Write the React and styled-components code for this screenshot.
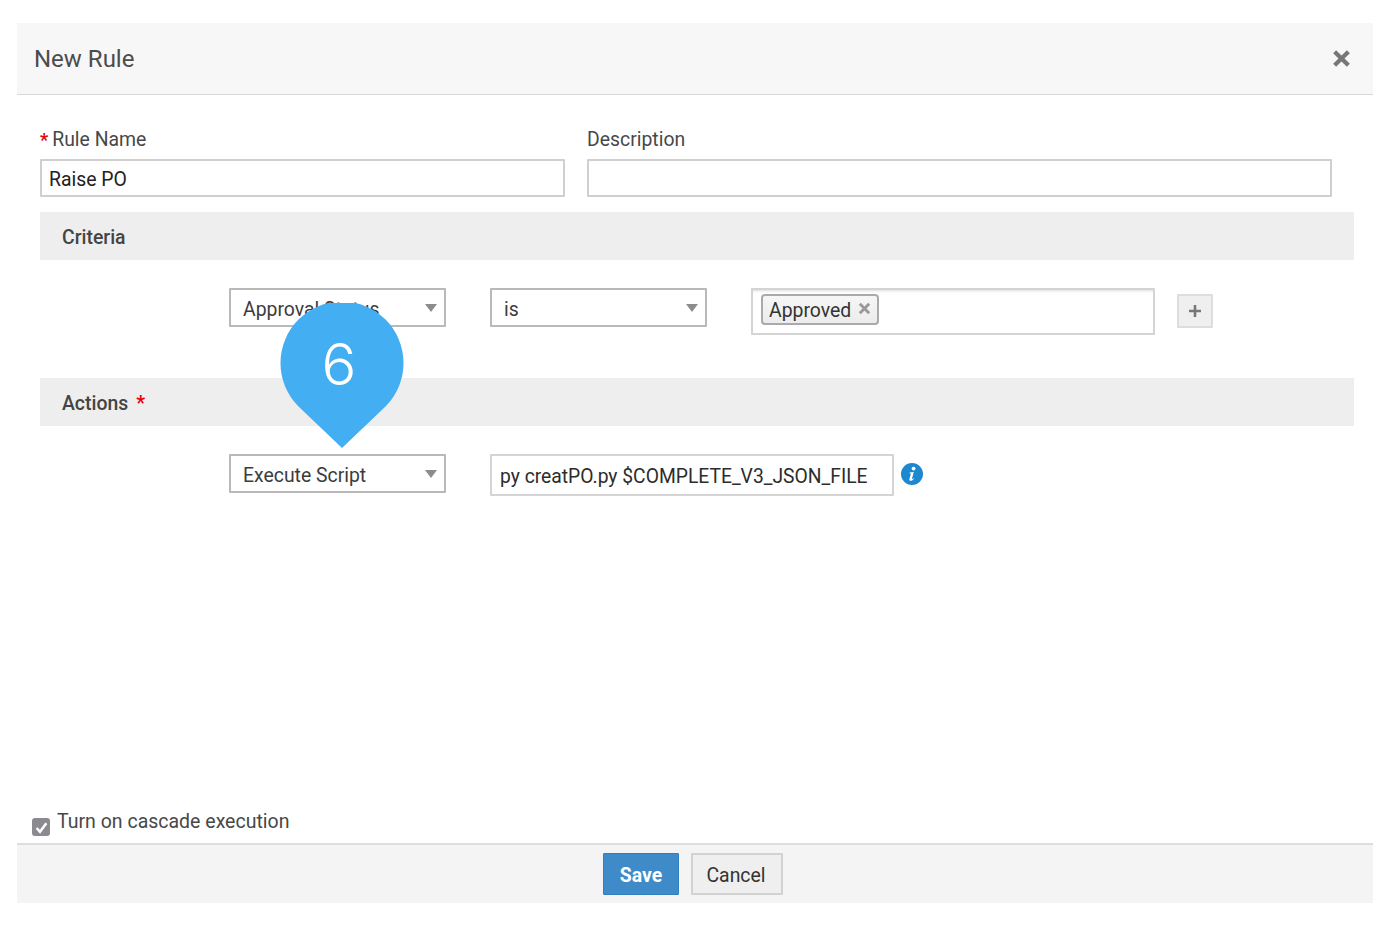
import React from 'react';
import styled, { createGlobalStyle } from 'styled-components';

const GlobalStyle = createGlobalStyle`
  html, body {
    margin: 0;
    padding: 0;
    background: #fff;
  }
  body {
    font-family: Roboto, "Liberation Sans", sans-serif;
    color: #444;
  }
  * {
    box-sizing: border-box;
  }
`;

const CrossIcon = ({ size = 18, color = '#777' }) => (
  <svg width={size} height={size} viewBox="0 0 18 18">
    <path d="M2.5 2.5L15.5 15.5M15.5 2.5L2.5 15.5" stroke={color} strokeWidth="4" fill="none" />
  </svg>
);

const Pin = () => (
  <PinWrap>
    <svg width="124" height="146" viewBox="0 0 124 146">
      <path
        d="M62 145L18 103A61.5 61.5 0 1 1 106 103Z"
        fill="#44aef2"
      />
    </svg>
    <PinNumber>6</PinNumber>
  </PinWrap>
);

export default function App() {
  return (
    <Page>
      <GlobalStyle />
      <Modal>
        <Header>
          <Title>New Rule</Title>
          <CrossIcon size={19} />
        </Header>

        <Body>
          <Fields>
            <Field>
              <Label>
                <Star>*</Star>Rule Name
              </Label>
              <TextBox readOnly value="Raise PO" />
            </Field>
            <Field>
              <Label>Description</Label>
              <TextBox readOnly value="" />
            </Field>
          </Fields>

          <Band>Criteria</Band>
          <CriteriaRow>
            <Select>Approval Status</Select>
            <Select>is</Select>
            <TagInput>
              <Tag>
                Approved
                <CrossIcon size={13} color="#999" />
              </Tag>
            </TagInput>
            <PlusButton>
              <svg width="14" height="14" viewBox="0 0 14 14">
                <path d="M7 1V13M1 7H13" stroke="#777" strokeWidth="2.6" fill="none" />
              </svg>
            </PlusButton>
          </CriteriaRow>

          <Band>
            Actions<BandStar>*</BandStar>
          </Band>
          <ActionRow>
            <Select>Execute Script</Select>
            <ScriptBox>py creatPO.py $COMPLETE_V3_JSON_FILE</ScriptBox>
            <svg width="22" height="22" viewBox="0 0 22 22">
              <circle cx="11" cy="11" r="11" fill="#1e88cf" />
              <circle cx="12.6" cy="5.6" r="1.9" fill="#fff" />
              <path
                d="M8.6 9.4L12.8 9L11 15.4C10.8 16.1 11.3 16.2 12.6 15.2L13 15.7C11.4 17.4 10.4 17.9 9.3 17.8C8.3 17.7 8.2 16.9 8.5 15.8L9.8 11C9.9 10.4 9.5 10.2 8.5 10.2Z"
                fill="#fff"
              />
            </svg>
          </ActionRow>

          <Cascade>
            <CheckBox>
              <svg width="13" height="13" viewBox="0 0 12 12">
                <path d="M1.5 6.5L4.6 10L10.5 2" stroke="#fff" strokeWidth="2.3" fill="none" />
              </svg>
            </CheckBox>
            Turn on cascade execution
          </Cascade>
        </Body>

        <Footer>
          <SaveButton>Save</SaveButton>
          <CancelButton>Cancel</CancelButton>
        </Footer>
      </Modal>
      <Pin />
    </Page>
  );
}

const Page = styled.div`
  position: relative;
  width: 1396px;
  height: 928px;
  padding: 23px 23px 25px 17px;
  overflow: hidden;
`;

const Modal = styled.div`
  display: flex;
  flex-direction: column;
  height: 100%;
`;

const Header = styled.div`
  display: flex;
  align-items: center;
  justify-content: space-between;
  flex: none;
  height: 72px;
  padding: 0 22px 0 17px;
  background: #f7f7f7;
  border-bottom: 1px solid #d8d8d8;
`;

const Title = styled.div`
  font-size: 24px;
  color: #4c4c4c;
`;

const Body = styled.div`
  display: flex;
  flex-direction: column;
  flex: 1;
  padding: 32px 19px 0 23px;
`;

const Fields = styled.div`
  display: grid;
  grid-template-columns: 525px 745px;
  column-gap: 22px;
`;

const Field = styled.div`
  display: flex;
  flex-direction: column;
  gap: 8px;
`;

const Label = styled.label`
  height: 24px;
  padding-top: 1px;
  font-size: 19.4px;
  line-height: 24px;
  color: #484848;
`;

const Star = styled.span`
  color: #e8000b;
  margin-right: 4px;
  font-size: 18px;
  font-weight: 700;
  line-height: 1;
`;

const TextBox = styled.input`
  width: 100%;
  height: 38px;
  padding: 2px 7px 0;
  border: 2px solid #cfcfcf;
  border-radius: 1px;
  outline: none;
  background: #fff;
  color: #222;
  font: 19.4px Roboto, sans-serif;
`;

const Band = styled.div`
  display: flex;
  align-items: center;
  height: 48px;
  margin-top: 15px;
  padding: 2px 0 0 22px;
  background: #eee;
  color: #444;
  font-size: 19.4px;
  font-weight: 500;
`;

const BandStar = styled.span`
  color: #e8000b;
  margin-left: 8px;
  font-weight: 700;
`;

const CriteriaRow = styled.div`
  display: flex;
  align-items: flex-start;
  gap: 44px;
  height: 103px;
  padding: 28px 0 0 189px;
`;

const ActionRow = styled.div`
  display: flex;
  align-items: flex-start;
  gap: 44px;
  padding: 28px 0 0 189px;

  svg {
    margin: 9px 0 0 -37px;
  }
`;

const Select = styled.div`
  position: relative;
  width: 217px;
  height: 39px;
  padding-left: 12px;
  border: 2px solid #b9b9b9;
  border-radius: 1px;
  background: #fff;
  color: #3c3c3c;
  font-size: 19.4px;
  line-height: 40px;

  &::after {
    content: '';
    position: absolute;
    right: 7px;
    top: 14px;
    border-left: 6.5px solid transparent;
    border-right: 6.5px solid transparent;
    border-top: 8px solid #8c8c8c;
  }
`;

const TagInput = styled.div`
  display: flex;
  align-items: flex-start;
  width: 404px;
  height: 47px;
  padding: 4px 8px;
  border: 2px solid #d4d4d4;
  border-radius: 1px;
  box-shadow: inset 0 3px 3px -2px #ddd;
`;

const Tag = styled.div`
  display: flex;
  align-items: center;
  gap: 7px;
  height: 31px;
  padding: 2px 6px 0;
  border: 2px solid #aaa;
  border-radius: 4px;
  background: linear-gradient(#f6f6f6, #ececec);
  color: #333;
  font-size: 19.4px;

  svg {
    margin-top: -4px;
  }
`;

const PlusButton = styled.div`
  display: flex;
  align-items: center;
  justify-content: center;
  width: 36px;
  height: 34px;
  margin: 6px 0 0 -22px;
  border: 2px solid #ddd;
  border-radius: 1px;
  background: #efefef;
`;

const ScriptBox = styled.div`
  width: 404px;
  height: 42px;
  padding-left: 8px;
  border: 2px solid #d4d4d4;
  border-radius: 1px;
  color: #2c2c2c;
  font-size: 19.3px;
  line-height: 41px;
  white-space: nowrap;
`;

const Cascade = styled.label`
  display: flex;
  align-items: flex-end;
  gap: 7px;
  margin: auto 0 9px -8px;
  color: #484848;
  font-size: 19.5px;
  line-height: 24px;
`;

const CheckBox = styled.span`
  display: flex;
  align-items: center;
  justify-content: center;
  flex: none;
  width: 18px;
  height: 18px;
  margin-bottom: -2px;
  border-radius: 3px;
  background: #8b8b8f;
`;

const Footer = styled.div`
  display: flex;
  align-items: flex-start;
  justify-content: center;
  flex: none;
  gap: 12px;
  height: 60px;
  padding-top: 8px;
  padding-right: 4px;
  background: #f4f4f4;
  border-top: 2px solid #ddd;
`;

const SaveButton = styled.button`
  width: 76px;
  height: 42px;
  padding: 2px 0 0;
  border: 1px solid #2f7fc1;
  border-radius: 1px;
  background: #3f8ac9;
  color: #fff;
  font: 700 19.4px Roboto, sans-serif;
`;

const CancelButton = styled.button`
  width: 92px;
  height: 42px;
  padding: 2px 2px 0 0;
  border: 2px solid #d2d2d2;
  border-radius: 1px;
  background: #efefef;
  color: #333;
  font: 19.4px Roboto, sans-serif;
`;

const PinWrap = styled.div`
  position: absolute;
  left: 280px;
  top: 303px;
  width: 124px;
  height: 146px;
`;

const PinNumber = styled.span`
  position: absolute;
  left: 0;
  top: 30px;
  width: 118px;
  text-align: center;
  color: #fff;
  font-family: Inter, Roboto, sans-serif;
  font-size: 58px;
  font-weight: 300;
  line-height: 62px;
`;
